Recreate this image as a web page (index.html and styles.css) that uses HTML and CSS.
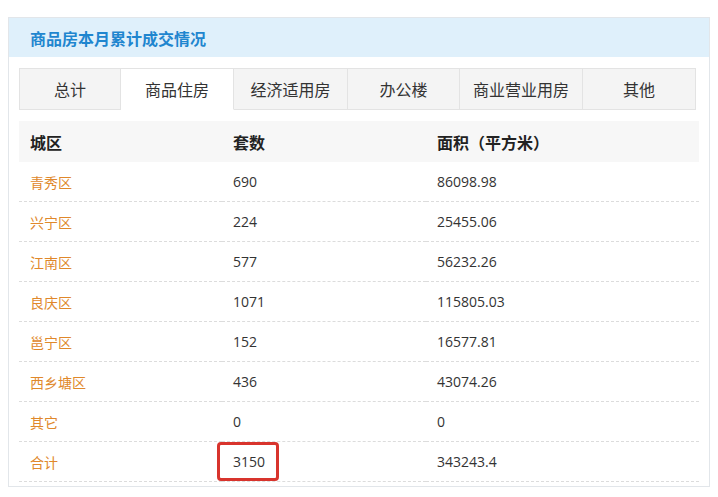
FILE: index.html
```html
<!DOCTYPE html>
<html lang="zh-CN">
<head>
<meta charset="utf-8">
<title>商品房本月累计成交情况</title>
<link rel="stylesheet" href="styles.css">
</head>
<body>
<div class="panel">
  <div class="panel-head">商品房本月累计成交情况</div>
  <div class="panel-body">
    <div class="tabs">
      <div class="tab">总计</div>
      <div class="tab active">商品住房</div>
      <div class="tab">经济适用房</div>
      <div class="tab">办公楼</div>
      <div class="tab">商业营业用房</div>
      <div class="tab">其他</div>
    </div>
    <table class="data">
      <thead>
        <tr><th class="c1">城区</th><th class="c2">套数</th><th class="c3">面积（平方米）</th></tr>
      </thead>
      <tbody>
        <tr><td class="area">青秀区</td><td>690</td><td>86098.98</td></tr>
        <tr><td class="area">兴宁区</td><td>224</td><td>25455.06</td></tr>
        <tr><td class="area">江南区</td><td>577</td><td>56232.26</td></tr>
        <tr><td class="area">良庆区</td><td>1071</td><td>115805.03</td></tr>
        <tr><td class="area">邕宁区</td><td>152</td><td>16577.81</td></tr>
        <tr><td class="area">西乡塘区</td><td>436</td><td>43074.26</td></tr>
        <tr><td class="area">其它</td><td>0</td><td>0</td></tr>
        <tr><td class="area">合计</td><td><span class="mark">3150</span></td><td>343243.4</td></tr>
      </tbody>
    </table>
  </div>
</div>
</body>
</html>
```
FILE: styles.css
```css
html, body {
  margin: 0;
  padding: 0;
  background: #ffffff;
}
body {
  padding: 17px 8px 0 8px;
  font-family: "Open Sans", "Noto Sans CJK SC", sans-serif;
  color: #333333;
}
.panel {
  border: 1px solid #e2e6ea;
  background: #ffffff;
  height: 470px;
  box-sizing: border-box;
}
.panel-head {
  height: 39px;
  background: #dff0fb;
  color: #1f86cf;
  font-family: "Noto Sans CJK SC", sans-serif;
  font-weight: bold;
  font-size: 16px;
  line-height: 40px;
  padding-left: 21px;
}
.panel-body {
  padding: 11px 9px 0 10px;
}
.tabs {
  display: grid;
  grid-template-columns: 102px 113px 114px 112px 123px 113px;
  height: 42px;
}
.tab {
  background: #f4f4f4;
  border: 1px solid #e3e3e3;
  border-left: none;
  box-sizing: border-box;
  text-align: center;
  font-family: "Noto Sans CJK SC", sans-serif;
  font-size: 16px;
  line-height: 40px;
  color: #333333;
}
.tab:first-child {
  border-left: 1px solid #e3e3e3;
}
.tab.active {
  background: #ffffff;
  border-bottom-color: #ffffff;
}
.data {
  width: 680px;
  margin-top: 11px;
  border-collapse: collapse;
  table-layout: fixed;
}
.data th {
  background: #f7f7f7;
  height: 41px;
  text-align: left;
  padding: 0 0 0 11px;
  font-family: "Noto Sans CJK SC", sans-serif;
  font-weight: bold;
  font-size: 16px;
  color: #222222;
}
.data .c1 { width: 192px; }
.data .c2 { width: 193px; }
.data td {
  height: 39px;
  padding: 0 0 0 11px;
  border-bottom: 1px dashed #dcdcdc;
  font-size: 14px;
  color: #333333;
}
.data td.area {
  color: #e0882b;
  font-family: "Noto Sans CJK SC", sans-serif;
}
.mark {
  position: relative;
}
.mark::after {
  content: "";
  position: absolute;
  left: -16px;
  right: -14px;
  top: -10px;
  bottom: -10px;
  border: 3px solid #d8342d;
  border-radius: 4px;
}
```
